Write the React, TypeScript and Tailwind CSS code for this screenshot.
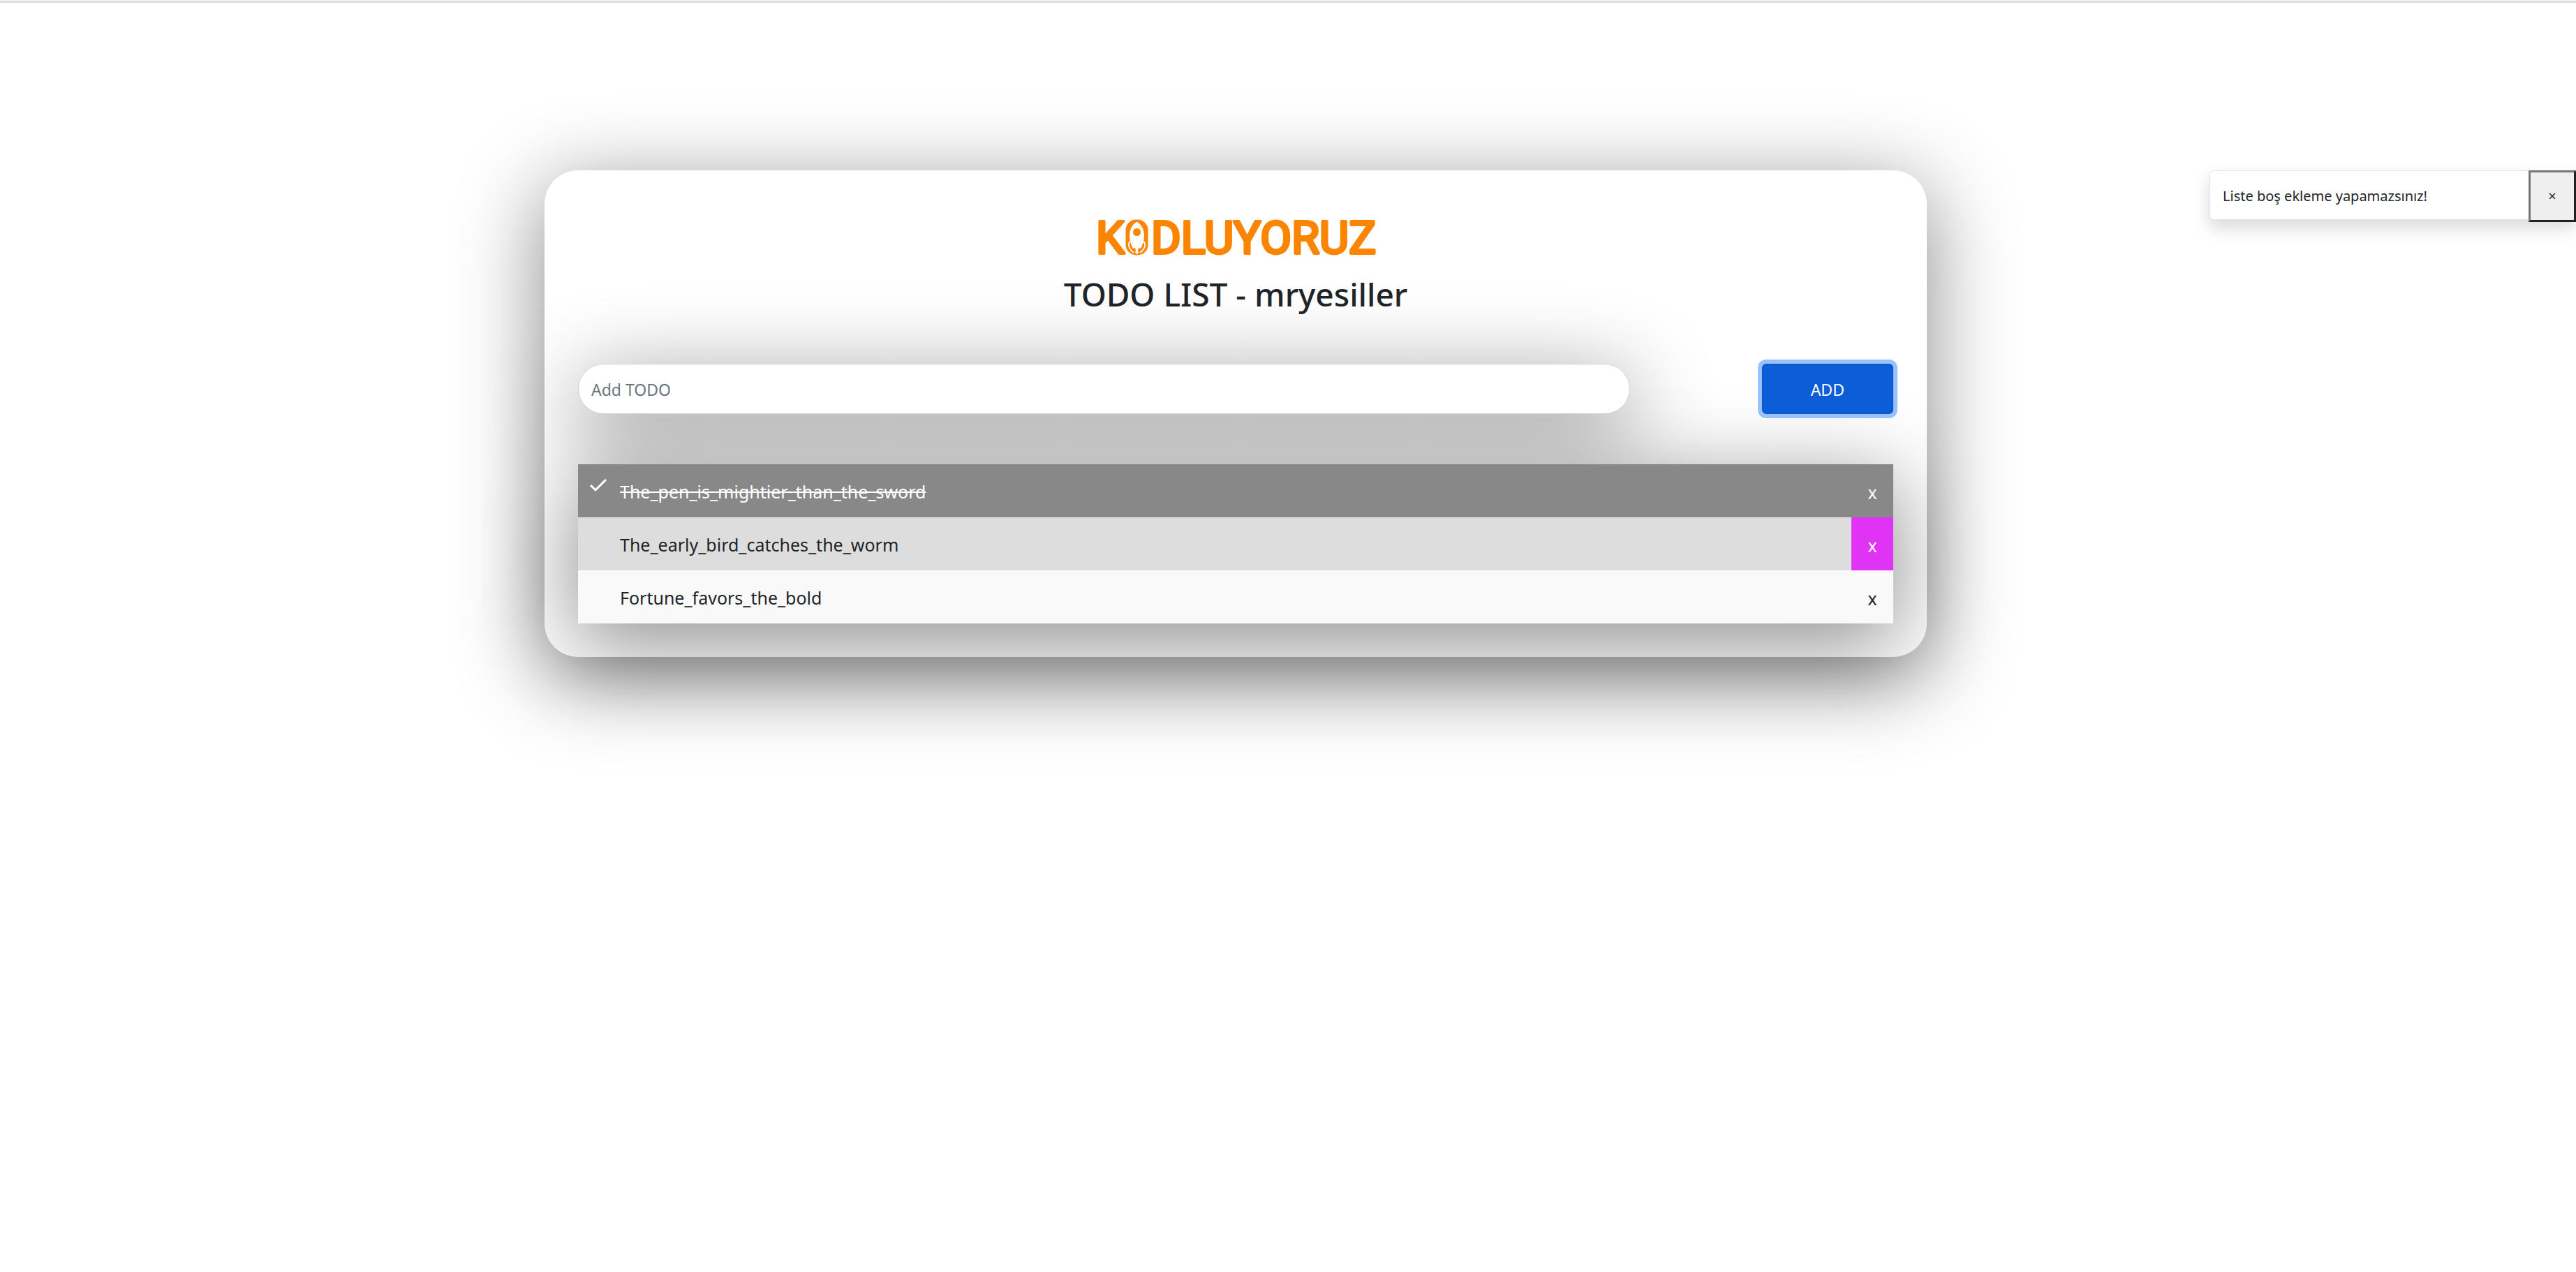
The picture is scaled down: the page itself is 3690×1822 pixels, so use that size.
import { useState } from "react";

type Todo = { id: number; text: string; done: boolean };

const initialTodos: Todo[] = [
  { id: 1, text: "The_pen_is_mightier_than_the_sword", done: true },
  { id: 2, text: "The_early_bird_catches_the_worm", done: false },
  { id: 3, text: "Fortune_favors_the_bold", done: false },
];

function Logo() {
  return (
    <svg viewBox="0 0 400 56" className="h-14 w-[400px] overflow-visible" role="img" aria-label="Kodluyoruz">
      <g
        fill="#fb8500"
        stroke="#fb8500"
        strokeWidth="4"
        strokeLinejoin="round"
        fontFamily="Roboto, sans-serif"
        fontSize="65"
      >
        <text x="0" y="51">K</text>
        <text x="79" y="51">DLUYORUZ</text>
      </g>
      <rect x="41.5" y="1" width="33.5" height="53.5" rx="15" fill="#fff" />
      <rect x="42.5" y="2.5" width="32" height="51" rx="15" fill="#fb8500" />
      <path
        d="M58.5 5.5c7 4 10.5 12 10.5 20 0 7-2 13-5 18.5l-3-1-1 3.500 1 3-2.500 3-2.500-3 1-3-1-3.500-3 1c-3-5.500-5-11.500-5-18.500 0-8 3.500-16 10.500-20Z"
        fill="#fff"
      />
      <circle cx="58.5" cy="20.5" r="5.5" fill="#fb8500" />
      <path
        d="M48.5 34c-3 4-2 10 5 15.500M68.500 34c3 4 2 10-5 15.500"
        fill="none"
        stroke="#fff"
        strokeWidth="1.8"
        strokeLinecap="round"
      />
    </svg>
  );
}

function TodoRow({ todo, onToggle, onRemove }: { todo: Todo; onToggle: () => void; onRemove: () => void }) {
  const tone = todo.done
    ? "bg-[#888888] text-white"
    : "text-[#212529] odd:bg-[#f9f9f9] even:bg-[#dddddd]";
  const removeTone = todo.id === 2 ? "bg-[#e033f5] text-white" : "";
  return (
    <li className={`relative flex items-stretch text-[25px] leading-10 ${tone}`}>
      <button
        type="button"
        onClick={onToggle}
        className={`relative grow pt-[19px] pb-[17px] pl-[60px] text-left ${todo.done ? "line-through decoration-2" : ""}`}
      >
        {todo.done && (
          <svg viewBox="0 0 26 20" className="absolute top-5 left-4 h-5 w-[26px]" aria-hidden="true">
            <path d="M2 10l7 7L24 2" fill="none" stroke="#fff" strokeWidth="3" />
          </svg>
        )}
        {todo.text}
      </button>
      <button type="button" onClick={onRemove} className={`w-[60px] pt-5 pb-4 text-center ${removeTone}`}>
        x
      </button>
    </li>
  );
}

export default function App() {
  const [todos, setTodos] = useState(initialTodos);
  const [value, setValue] = useState("");
  const [toast, setToast] = useState(true);

  const add = () => {
    if (!value.trim()) {
      setToast(true);
      return;
    }
    setTodos([...todos, { id: Date.now(), text: value.trim(), done: false }]);
    setValue("");
  };

  return (
    <div className="relative min-h-screen overflow-hidden bg-white font-['Noto_Sans',sans-serif] text-[#212529]">
      <div className="h-1 border-b-2 border-[#d3d9df] bg-[#f1f1f1]" />
      <main className="flex justify-center pt-60 pr-[150px]">
        <section className="w-full max-w-[1980px] rounded-[48px] bg-white p-12 shadow-[0_27px_120px_6px_rgba(0,0,0,0.43)]">
          <header className="flex flex-col items-center pt-5">
            <Logo />
            <h1 className="mt-6 text-[46px] leading-[58px] font-medium">TODO LIST - mryesiller</h1>
          </header>
          <form
            className="mt-[71px] flex items-center justify-between"
            onSubmit={(e) => {
              e.preventDefault();
              add();
            }}
          >
            <input
              aria-label="Add TODO"
              placeholder="Add TODO"
              value={value}
              onChange={(e) => setValue(e.target.value)}
              className="relative h-18 w-4/5 rounded-full border border-[#ced4da] bg-white px-[18px] pt-0.5 text-[23px] shadow-[0_27px_120px_6px_rgba(0,0,0,0.43)] placeholder:text-[#6c757d]"
            />
            <button
              type="submit"
              className="relative h-18 w-1/10 rounded-md border-2 border-[#0a58ca] bg-[#0b5ed7] pt-0.5 text-[23px] text-white shadow-[0_0_0_6px_#98c1fe]"
            >
              ADD
            </button>
          </form>
          <ul className="mt-18 shadow-[0_27px_120px_6px_rgba(0,0,0,0.43)]">
            {todos.map((t) => (
              <TodoRow
                key={t.id}
                todo={t}
                onToggle={() => setTodos(todos.map((o) => (o.id === t.id ? { ...o, done: !o.done } : o)))}
                onRemove={() => setTodos(todos.filter((o) => o.id !== t.id))}
              />
            ))}
          </ul>
        </section>
      </main>
      {toast && (
        <div
          role="alert"
          className="absolute top-[244px] right-0 flex h-[71px] w-[525px] items-start rounded-md border border-black/10 bg-white shadow-[0_12px_24px_rgba(0,0,0,0.15)]"
        >
          <p className="grow pt-5 pl-[18px] text-[20px] leading-8">Liste boş ekleme yapamazsınız!</p>
          <button
            type="button"
            aria-label="Close"
            onClick={() => setToast(false)}
            className="-mt-px -mr-px h-[74px] w-[68px] border-[3px] border-t-[#767676] border-r-[#212121] border-b-[#212121] border-l-[#767676] bg-[#efefef] text-[20px]"
          >
            ×
          </button>
        </div>
      )}
    </div>
  );
}
